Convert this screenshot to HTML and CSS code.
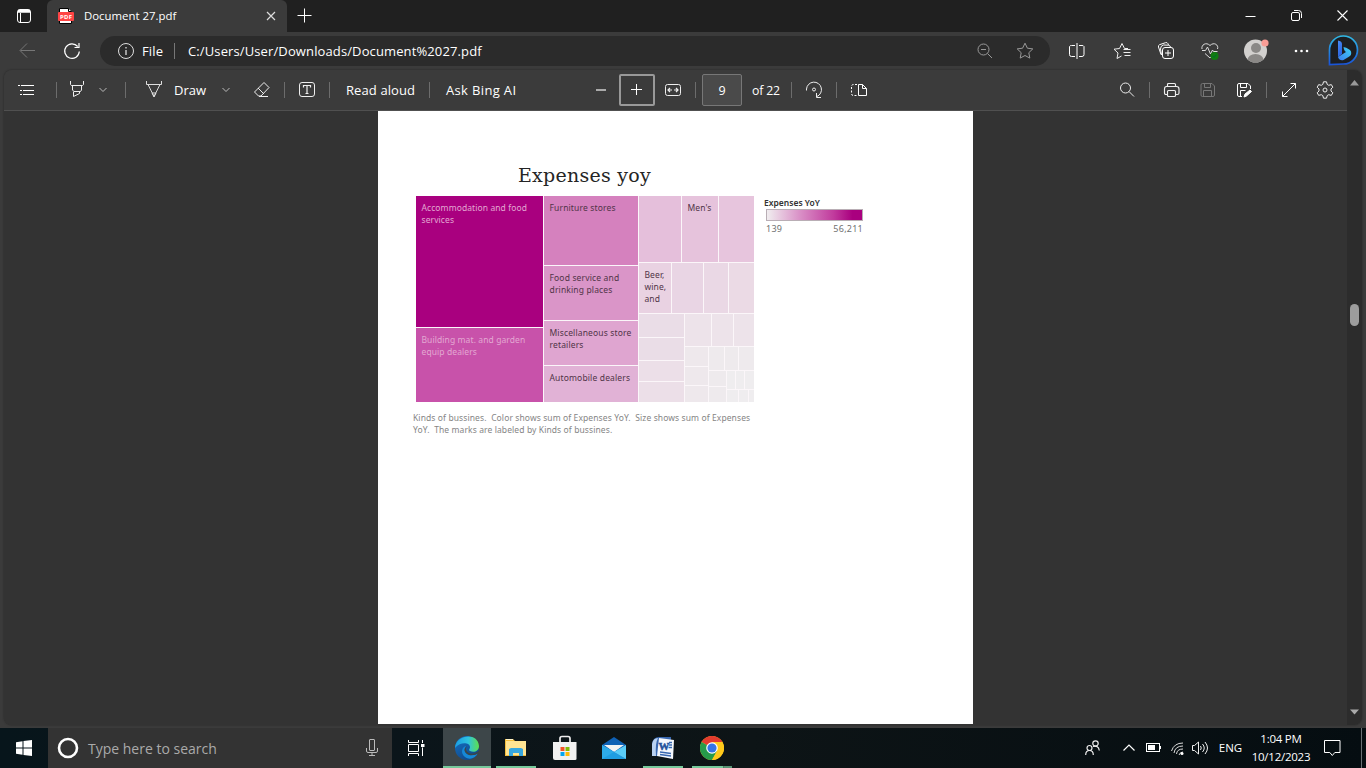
FILE: index.html
```html
<!DOCTYPE html>
<html lang="en">
<head>
<meta charset="utf-8">
<title>Document 27.pdf</title>
<link rel="stylesheet" href="styles.css">
</head>
<body>
<div class="screen">
  <header class="titlebar">
    <div class="tab-actions"><svg width="16" height="16" viewBox="0 0 16 16" fill="none" stroke="#fff"><rect x="1.5" y="1.5" width="13" height="13" rx="2.5"/><path d="M2 2.5h12M2 4h12" stroke-width="1.6"/><path d="M4.5 5v9"/></svg></div>
    <div class="tab">
      <svg class="pdf-icon" width="16" height="16" viewBox="0 0 16 16"><path d="M1.5.5h9l3 3v12h-12z" fill="#fff" stroke="#000"/><path d="M10.500.5v3h3" fill="#fff" stroke="#000"/><rect y="4" width="16" height="9" rx="1" fill="#f44"/><text x="8" y="11" class="pdf-label" textLength="12">PDF</text></svg>
      <span class="tab-title">Document 27.pdf</span>
      <svg class="tab-close" width="10" height="10" viewBox="0 0 10 10" stroke="#ddd" stroke-width="1.2"><path d="M1 1l8 8M9 1L1 9"/></svg>
    </div>
    <svg class="new-tab" width="15" height="16" viewBox="0 0 15 16" stroke="#fff"><path d="M7.500.5v14M.5 7.500h14"/></svg>
    <div class="window-buttons">
      <span><svg width="12" height="12" stroke="#fff"><path d="M.5 6.500h10"/></svg></span>
      <span><svg width="12" height="12" fill="none" stroke="#fff"><rect x=".5" y="2.500" width="8" height="8" rx="1.500"/><path d="M3 .5h4.500a3 3 0 0 1 3 3V8"/></svg></span>
      <span><svg width="12" height="12" stroke="#fff" stroke-width="1.100"><path d="M.5.5l10 10M10.500.5l-10 10"/></svg></span>
    </div>
  </header>

  <nav class="navbar">
    <span class="cell"><svg width="18" height="16" fill="none" stroke="#777"><path d="M16 7.500H1.500M8 .5l-7 7 7 7"/></svg></span>
    <span class="cell"><svg width="18" height="18" fill="none" stroke="#fff" stroke-width="1.200"><path d="M16.300 9.500a7.300 7.300 0 1 1-1.600-5M16 1v4.500h-4.500"/></svg></span>
    <div class="address">
      <svg width="18" height="18" fill="none" stroke="#ddd"><circle cx="9" cy="9" r="7.500"/><path d="M9 8v5M9 5v1.500" stroke-width="1.300"/></svg>
      <span class="scheme">File</span><i class="divider"></i>
      <span class="url">C:/Users/User/Downloads/Document%2027.pdf</span>
      <svg class="zoom-out" width="16" height="16" fill="none" stroke="#999"><circle cx="6.500" cy="6.500" r="5.500"/><path d="M10.500 10.500l4.500 4.500M4 6.500h5"/></svg>
      <svg width="18" height="18" viewBox="0 0 18 18" fill="none" stroke="#999"><path d="M9 1.200l2.400 5 5.400.700-4 3.800 1 5.400L9 13.500l-4.800 2.600 1-5.400-4-3.800 5.400-.7z"/></svg>
    </div>
    <span class="cell"><svg width="16" height="16" fill="none" stroke="#fff"><path d="M6 2.500H2.500a2 2 0 0 0-2 1v8a2 2 0 0 0 2 2H6M10 2.500h3a2 2 0 0 1 2 1v8a2 2 0 0 1-2 2h-3M8 0v16"/></svg></span>
    <span class="cell"><svg width="18" height="18" fill="none" stroke="#eee"><path d="M15 6.500h-3.500L9 1.500 6.500 6.500l-5.500.7L5 11l-1 5.500L8.500 14M10.500 7.500h7M10.500 10.500h7M11.500 13.500h6"/></svg></span>
    <span class="cell"><svg width="18" height="18" fill="none" stroke="#fff"><rect x="5.500" y="5.500" width="11" height="11" rx="2.500"/><path d="M11 8v6M8 11h6M4 12.500L1.500 5a2 2 0 0 1 1-2.300l6-2a2 2 0 0 1 2.500 1l.5 1.500M4.500 13L3.500 7a4 4 0 0 1 3-4l5 .2a2.500 2.500 0 0 1 2 1.800"/></svg></span>
    <span class="cell"><svg width="18" height="18" fill="none" stroke="#ddd"><path d="M1 7c-1-4 4-7.500 8-3.500 4-4 9-.5 7.500 3.500M4 11.500L9 16l1-1M1 8.500h3.500L6.500 5l3 7 2-4 1 1.500h4"/><circle cx="13.500" cy="14" r="4" fill="#107c10" stroke="none"/><path d="M11.500 14l1.500 1.500 2.500-3" stroke="#063"/></svg></span>
    <span class="cell"><svg class="avatar" width="26" height="26" viewBox="0 0 26 26"><defs><clipPath id="face"><circle cx="12.500" cy="14" r="11.500"/></clipPath></defs><circle cx="12.500" cy="14" r="11.500" fill="#d2d0ce"/><circle cx="13" cy="11" r="5" fill="#8a8886"/><ellipse cx="12.500" cy="23" rx="8" ry="6" fill="#8a8886" clip-path="url(#face)"/><circle cx="22" cy="6" r="3.600" fill="#f99d96"/></svg></span>
    <span class="cell"><svg width="16" height="4" fill="#fff"><circle cx="2" cy="2" r="1.300"/><circle cx="7.500" cy="2" r="1.300"/><circle cx="13" cy="2" r="1.300"/></svg></span>
    <span class="cell"><svg width="32" height="32" viewBox="0 0 32 32"><defs><linearGradient id="ring" x2="0" y2="1"><stop stop-color="#30b9e5"/><stop offset="1" stop-color="#1954d8"/></linearGradient><linearGradient id="bing" x2=".4" y2="1"><stop stop-color="#4a8cf5"/><stop offset="1" stop-color="#2a62e0"/></linearGradient><linearGradient id="lobe" x1="1" x2="0" y2="1"><stop stop-color="#3ed3f3"/><stop offset="1" stop-color="#3b7df0"/></linearGradient></defs><path d="M1.500 29.500V15.500A14 14 0 1 1 15.500 29z" fill="#1c1e22" stroke="url(#ring)" stroke-width="1.700"/><path d="M10 5.500q3.500.5 4 3V19l-4 3z" fill="url(#bing)"/><path d="M15.500 12q6 1.500 7.500 4.500 1 4-2.500 5.500l-5 3q-4 1-5.500-3l8-5q-2-1-2.500-5z" fill="url(#lobe)"/></svg></span>
  </nav>

  <main class="viewer">
    <div class="viewer-main">
      <div class="toolbar">
        <span class="tool contents"><svg width="18" height="12" stroke="#fff"><path d="M4 1.500h13M6 6.500h11M6 10.500h11M1 1.500h2M3 6.500h2M3 10.500h2"/></svg></span>
        <i class="sep wide"></i>
        <span class="tool slim"><svg width="16" height="18" fill="none" stroke="#eee"><path d="M1.500 0v3.500a2 2 0 0 0 1 1h11a2 2 0 0 0 1-1V0M3.500 5v4l1.500 1.500h6.500L12.500 9V5M4.500 10.500v5l6-3v-2"/></svg></span>
        <span class="tool drop"><svg width="8" height="6" fill="none" stroke="#bbb"><path d="M.5 1L4 4.500 7.500 1"/></svg></span>
        <i class="sep wide"></i>
        <span class="tool draw-icon"><svg width="16" height="18" fill="none" stroke="#ddd"><path d="M.5 0v3.500H15.500V0M2 3.500l6 12 6-12M6 12l2 4 2-4z"/></svg></span>
        <span class="draw">Draw</span>
        <span class="tool"><svg width="8" height="6" fill="none" stroke="#bbb"><path d="M.5 1L4 4.500 7.500 1"/></svg></span>
        <span class="tool"><svg width="16" height="18" viewBox="0 0 16 18" fill="none" stroke="#eee"><path d="M10 1.500l5 5-8 8.500H4.500L.5 11zM4 7l6 6M5 15.500h9"/></svg></span>
        <i class="sep"></i>
        <span class="tool"><svg width="16" height="16" fill="none" stroke="#eee"><rect x=".5" y=".5" width="15" height="14" rx="2.500"/><path d="M4.500 5.500v-2h7v2M8 3.500v8M6.500 11.500h3" stroke-width="1.200"/></svg></span>
        <i class="sep"></i>
        <span class="label read">Read aloud</span>
        <i class="sep"></i>
        <span class="label ask">Ask Bing AI</span>
        <span class="tool"><svg width="12" height="4" stroke="#aaa" stroke-width="2"><path d="M1 2h10"/></svg></span>
        <span class="tool focused"><svg width="12" height="12" stroke="#fff"><path d="M5.500 0v11M0 5.500h11"/></svg></span>
        <span class="tool"><svg width="16" height="14" fill="none" stroke="#eee"><rect x=".5" y="1.500" width="15" height="11" rx="2"/><path d="M3 7h4M5 5L3 7l2 2M13 7H9M11 5l2 2-2 2" stroke-width="1.200"/></svg></span>
        <i class="sep"></i>
        <span class="page-number">9</span>
        <span class="page-total">of 22</span>
        <i class="sep"></i>
        <span class="tool"><svg width="18" height="18" fill="none" stroke="#eee"><path d="M1.500 9.500V8a7.500 7.500 0 1 1 10.500 7.500M11.500 12v4.500H16"/><circle cx="9" cy="8.500" r="1.500"/></svg></span>
        <i class="sep"></i>
        <span class="tool"><svg width="18" height="14" fill="none" stroke="#fff"><path d="M7 1.500H3a2 2 0 0 0-1.500 2v7a2 2 0 0 0 1.500 2h4" stroke-dasharray="2 1.500"/><path d="M8.500 1.500H12.500l4 4v7h-8zM12.500 1.500v4h4"/></svg></span>
        <span class="spacer"></span>
        <span class="tool"><svg width="16" height="16" fill="none" stroke="#eee"><circle cx="6.500" cy="6" r="5"/><path d="M10 9.500l5 5"/></svg></span>
        <i class="sep"></i>
        <span class="tool"><svg width="18" height="16" fill="none" stroke="#eee" stroke-width="1.150"><path d="M4.500 4.500V2.500q0-1 1-1h6q1 0 1 1v2M4.500 12.500H3q-1.500 0-1.500-1.500V7q0-2.500 2-2.500h10q2.500 0 2.500 2.500v4q0 1.500-1.500 1.500h-2"/><rect x="4.500" y="8.500" width="8" height="6" rx="1"/></svg></span>
        <span class="tool"><svg width="16" height="16" fill="none" stroke="#777"><path d="M2.500 1.500h9.500l2.500 2.500v9q0 1.500-1.500 1.500H2.500Q1 14.500 1 13V3q0-1.500 1.500-1.500zM4.500 1.500v4h6v-4M3.500 14.500V8.500h8v6"/></svg></span>
        <span class="tool"><svg width="16" height="16" fill="none" stroke="#fff"><path d="M6 14.500H3Q1.500 14.500 1.500 13V3q0-1.500 1.500-1.500h9l2.500 2.500v3M4.500 1.500v4h6v-4M4.500 14V8.500h5"/><path d="M8 15l1-3 5-4 1.500 1.500-5 4.500z" fill="#fff"/></svg></span>
        <i class="sep"></i>
        <span class="tool"><svg width="16" height="16" fill="none" stroke="#fff"><path d="M1.500 14.500l13-13M9.500 1.500h5v5M1.500 9.500v5h5"/></svg></span>
        <span class="tool"><svg width="18" height="18" viewBox="0 0 18 18" fill="none" stroke="#eee"><path d="M7.500.8h3l.7 2.600 1.500.9 2.600-.7 1.500 2.600L15 8v2l1.800 1.800-1.500 2.600-2.600-.7-1.500.9-.7 2.600h-3l-.7-2.600-1.500-.9-2.600.7-1.500-2.600L3 10V8L1.200 6.200l1.500-2.600 2.600.7 1.500-.9z" stroke-linejoin="round"/><circle cx="9" cy="9" r="2"/></svg></span>
      </div>

      <div class="canvas">
        <article class="page">
          <h1>Expenses yoy</h1>
          <div class="chart-row">
            <div class="treemap">
              <div class="col c1">
                <div class="box accommodation">Accommodation and food<br>services</div>
                <div class="box building">Building mat. and garden<br>equip dealers</div>
              </div>
              <div class="col c2">
                <div class="box furniture">Furniture stores</div>
                <div class="box food">Food service and<br>drinking places</div>
                <div class="box misc">Miscellaneous store<br>retailers</div>
                <div class="box auto">Automobile dealers</div>
              </div>
              <div class="col c3">
                <div class="row r1"><div class="s1 w42"></div><div class="box s1b w36">Men's</div><div class="s1c grow"></div></div>
                <div class="row r2"><div class="box s2 w32">Beer,<br>wine,<br>and</div><div class="s2b w30"></div><div class="s2c w24"></div><div class="s2d grow"></div></div>
                <div class="row grow">
                  <div class="col w45"><div class="s3 h23"></div><div class="s3 h22"></div><div class="s3b h20"></div><div class="s3b grow"></div></div>
                  <div class="col grow">
                    <div class="row h32"><div class="s4 w26"></div><div class="s4 w21"></div><div class="s4 grow"></div></div>
                    <div class="row grow">
                      <div class="col w23"><div class="s5 h19"></div><div class="s5 h18"></div><div class="s5 grow"></div></div>
                      <div class="col grow">
                        <div class="row h23"><div class="s6 w15"></div><div class="s6 w13"></div><div class="s6 grow"></div></div>
                        <div class="row grow">
                          <div class="col w17"><div class="s6 h15"></div><div class="s6 grow"></div></div>
                          <div class="col grow">
                            <div class="row h18"><div class="s7 w8"></div><div class="s7 w8"></div><div class="s7 grow"></div></div>
                            <div class="row grow"><div class="s7 w11"></div><div class="s7 w9"></div><div class="s7 grow"></div></div>
                          </div>
                        </div>
                      </div>
                    </div>
                  </div>
                </div>
              </div>
            </div>
            <aside class="legend">
              <b>Expenses YoY</b>
              <div class="scale"></div>
              <div class="range"><span>139</span><span>56,211</span></div>
            </aside>
          </div>
          <p class="caption">Kinds of bussines.&nbsp; Color shows sum of Expenses YoY.&nbsp; Size shows sum of Expenses<br>YoY.&nbsp; The marks are labeled by Kinds of bussines.</p>
        </article>
      </div>
    </div>
    <div class="scrollbar">
      <svg width="9" height="6" fill="#999"><path d="M4.500 0L9 5.500H0z"/></svg>
      <i class="thumb"></i>
      <svg width="9" height="6" fill="#aaa"><path d="M4.500 5.500L9 .5H0z"/></svg>
    </div>
  </main>

  <footer class="taskbar">
    <span class="start"><svg width="16" height="16" fill="#fff"><path d="M0 2.200L6.500 1.300v6.200H0zM7.500 1.100L16 0v7.500H7.500zM0 8.500h6.500v6.200L0 13.800zM7.500 8.500H16V16l-8.500-1.100z"/></svg></span>
    <div class="search">
      <svg width="22" height="22" fill="none" stroke="#fff" stroke-width="2.600"><circle cx="11" cy="11" r="9"/></svg>
      <span>Type here to search</span>
      <svg width="12" height="18" fill="none" stroke="#bbb"><rect x="3.500" y=".5" width="5" height="11" rx=".5"/><path d="M.5 9v3q0 1.500 1.500 1.500h8q1.500 0 1.500-1.500V9M6 14v2M3 16.500h6"/></svg>
    </div>
    <span class="task-view"><svg width="17" height="16" fill="none" stroke="#fff"><path d="M.5 0v2.500h10V0M.5 16v-2.500h10V16M.5 4.500h10v7H.5zM14.500 0v3M14.500 7.500V16"/><path d="M13 4h3.500v3H13z" fill="#fff" stroke="none"/></svg></span>
    <span class="app active"><svg width="24" height="24" viewBox="0 0 24 24"><defs><linearGradient id="e1"><stop stop-color="#1b9de2"/><stop offset=".55" stop-color="#2fc3df"/><stop offset="1" stop-color="#5ee04b"/></linearGradient><linearGradient id="e2" x2=".5" y2="1"><stop stop-color="#1473c8"/><stop offset="1" stop-color="#114a8b"/></linearGradient></defs><circle cx="12" cy="12" r="12" fill="url(#e2)"/><path d="M0 12C0-1 23-5 24 10c0 5-5 7-9 5-2-1 0-2 0-4 0-4-9-6-15 1z" fill="url(#e1)"/><path d="M11 10c-4 5 1 10 6 9 3 0 5-1 6-2-3 6-9 7-13 4-5-4-3-10 1-11z" fill="#1688d7"/><path d="M12 10q-3 4 2 7 4 2 10-2v2q-7 4-12 1-5-4 0-8z" fill="#3b4649"/></svg></span>
    <span class="app open"><svg width="22" height="20" viewBox="0 0 22 20"><path d="M0 1h8l2 2h11v15H0z" fill="#f4bd3b"/><path d="M1 3h20v14H1z" fill="#ffe493"/><path d="M1 1.500h7" stroke="#fff4ca"/><path d="M4 18v-7l2-1h10l2 1v7h-4v-3H8v3z" fill="#37a7df"/></svg></span>
    <span class="app"><svg width="24" height="26" viewBox="0 0 24 26"><path d="M7 10V3.500q0-2 2-2h6q2 0 2 2V10" fill="none" stroke="#eee" stroke-width="1.700"/><path d="M0 7h23.500v17q0 1-1.500 1H2q-2 0-2-2z" fill="#f1f1f1"/><path d="M7.500 12h4v4h-4z" fill="#f35325"/><path d="M12.500 12h4v4h-4z" fill="#81bc06"/><path d="M7.500 17h4v4h-4z" fill="#05a6f0"/><path d="M12.500 17h4v4h-4z" fill="#ffba08"/></svg></span>
    <span class="app"><svg width="24" height="24" viewBox="0 0 24 24"><path d="M0 9l12-8 12 8v14H0z" fill="#0f61b5"/><path d="M2 9h20l-10 7z" fill="#f3f3f3"/><path d="M0 9l24 14H0z" fill="#1f9de2"/><path d="M24 9v14L12 16z" fill="#5acdf8"/><path d="M0 9l12 7-12 7z" fill="#2daae8"/></svg></span>
    <span class="app open"><svg width="24" height="24" viewBox="0 0 24 24"><path d="M1 8Q2 1 8 1h12v19H1z" fill="#3867af"/><path d="M1 8Q2 2 7 2q-3 5-2 18H1z" fill="#b9d1f0"/><path d="M8 2l15 2-1 19-16-3z" fill="#f5f8fd"/><text x="7.500" y="14" class="word-mark" textLength="10">W</text><path d="M18 6.500h3M18 9h3M17.500 11.500h3.500M9 16l11 1.500M9 18.500l11 1.500" stroke="#3867af" stroke-width="1.300"/></svg></span>
    <span class="app open chrome"><svg width="24" height="24" viewBox="0 0 24 24"><circle cx="12" cy="12" r="12" fill="#ffc91b"/><path d="M12 12L1.600 6A12 12 0 0 1 22.400 6z" fill="#e33b2e"/><path d="M12 12L1.600 6A12 12 0 0 0 12 24l5-9z" fill="#269b4a"/><path d="M12 6h10.400A12 12 0 0 1 12 24l5-9z" fill="#ffc91b"/><circle cx="12" cy="12" r="5.800" fill="#fff"/><circle cx="12" cy="12" r="4.600" fill="#3474e6"/></svg></span>
    <span class="spacer"></span>
    <span class="tray people"><svg width="16" height="16" fill="none" stroke="#eee" stroke-width="1.200"><circle cx="10.500" cy="3.500" r="2.700"/><circle cx="4.500" cy="8" r="2.500"/><path d="M.7 15q0-4.500 3.800-4.500T8.300 15M8 6.500q5.500-1.500 6.300 4"/></svg></span>
    <span class="tray up"><svg width="12" height="8" fill="none" stroke="#fff" stroke-width="1.200"><path d="M.5 6.500l5.500-5.500 5.500 5.500"/></svg></span>
    <span class="tray battery"><svg width="16" height="10" fill="none" stroke="#fff"><rect x=".5" y=".5" width="13" height="8"/><path d="M2 2h7v5H2z" fill="#fff" stroke="none"/><path d="M14.500 3v3"/></svg></span>
    <span class="tray wifi"><svg width="14" height="13" fill="none" stroke="#ddd"><path d="M.5 9Q3 1 12 1M3 11Q4 4 12 4M5.500 12Q6 7 12 7M8 13q1-3 4-3"/><circle cx="11" cy="11.500" r="1.500" fill="#fff" stroke="none"/></svg></span>
    <span class="tray sound"><svg width="18" height="14" fill="none" stroke="#eee"><path d="M.5 4.500h2l4-3.500v12l-4-3.500h-2zM8.500 5q1.500 2 0 4M10.500 3q3.500 4 0 8M13 1q5 6 0 12"/></svg></span>
    <span class="tray lang">ENG</span>
    <span class="tray clock">1:04 PM<br>10/12/2023</span>
    <span class="tray notice"><svg width="18" height="16" fill="none" stroke="#fff"><path d="M.5.500h15.500v12h-5.200l-2.500 3-2.500-3H.5z"/></svg></span>
    <i class="desktop-edge"></i>
  </footer>
</div>
</body>
</html>
```
FILE: styles.css
```css
* { box-sizing: border-box; }
body { margin: 0; font-family: "Open Sans", "Noto Sans", sans-serif; color: #fff; }
svg { display: block; flex: none; }
.screen { width: 1366px; height: 768px; overflow: hidden; display: flex; flex-direction: column; background: #3b3b3b; }

.titlebar { height: 32px; flex: none; display: flex; align-items: center; background: #202020; }
.tab-actions { width: 47px; display: flex; justify-content: center; }
.tab { width: 240px; height: 32px; display: flex; align-items: center; padding: 0 11px; background: #3b3b3b; border-radius: 6px 6px 0 0; font-size: 11.400px; }
.tab-title { margin-left: 10px; flex: 1; white-space: nowrap; padding-bottom: 1px; }
.pdf-label { font: bold 6px "Open Sans", sans-serif; fill: #fff; text-anchor: middle; }
.new-tab { margin-left: 10px; }
.window-buttons { margin-left: auto; display: flex; }
.window-buttons span { width: 46px; display: flex; justify-content: center; }

.navbar { height: 38px; flex: none; display: grid; grid-template-columns: 56px 32px 967px 44px 46px 42px 46px 46px 46px 38px; align-items: center; }
.cell { display: flex; justify-content: center; align-items: center; }
.avatar { margin-top: -3px; }
.address { height: 30px; margin: 0 5px 0 12px; padding: 0 16px 0 17px; border-radius: 15px; background: #2b2b2b; display: flex; align-items: center; font-size: 13px; white-space: nowrap; }
.scheme { margin-left: 7px; width: 32px; letter-spacing: .15px; }
.divider { width: 1px; height: 16px; background: #777; }
.url { margin-left: 13px; flex: 1; letter-spacing: .12px; }
.zoom-out { margin-right: 23px; }

.viewer { height: 655px; flex: none; margin: 0 4px; display: flex; border-radius: 8px; overflow: hidden; box-shadow: 0 0 2px #222; }
.viewer-main { width: 1343px; display: flex; flex-direction: column; }
.toolbar { height: 41px; flex: none; display: flex; align-items: center; background: #3b3b3b; border-bottom: 1px solid #505050; font-size: 13px; white-space: nowrap; }
.tool { width: 36px; height: 32px; display: flex; align-items: center; justify-content: center; }
.contents { width: 44px; }
.slim { width: 24px; }
.drop { width: 28px; }
.draw-icon { width: 40px; }
.draw { width: 34px; }
.sep { width: 1px; height: 16px; margin: 0 4px; background: #6c6c6c; }
.sep.wide { margin: 0 8px; }
.label { padding-left: 12px; }
.read { width: 91px; letter-spacing: .1px; }
.ask { width: 149px; letter-spacing: .35px; }
.focused { border: 2px solid #999; border-radius: 2px; }
.page-number { width: 40px; height: 32px; margin: 0 2px; border: 1px solid #777; border-radius: 2px; background: #4a4a4a; display: flex; align-items: center; justify-content: center; font-size: 12.500px; }
.page-total { width: 43px; padding-left: 8px; font-size: 12.300px; letter-spacing: -.2px; }
.spacer { flex: 1; }
.toolbar .tool:last-child { margin-right: 4px; }

.canvas { flex: 1; background: #333; display: flex; padding-left: 374px; }
.page { width: 595px; height: 613px; background: #fff; color: #333; padding: 50px 0 0 38px; font-family: "Noto Sans", "Open Sans", sans-serif; }
h1 { margin: 0 0 7px 102px; font: 19px/28px "DejaVu Serif", serif; letter-spacing: .25px; color: #252525; white-space: nowrap; }
.chart-row { display: flex; }
.treemap { width: 337.500px; height: 206px; display: flex; gap: 1px; background: #fbf6f9; font-size: 8.500px; line-height: 12px; white-space: nowrap; color: #503447; letter-spacing: .09px; }
.col { display: flex; flex-direction: column; gap: 1px; }
.row { display: flex; gap: 1px; }
.col > div, .row > div { min-width: 0; min-height: 0; }
.grow { flex: 1; }
.box { padding: 6px 0 0 5.500px; }
.c1 { width: 127px; color: #e3a8d2; }
.c2 { width: 94px; letter-spacing: .15px; }
.c3 { flex: 1; }
.accommodation { height: 131px; background: #a9007f; }
.building { flex: 1; background: #c852aa; }
.furniture { height: 69px; background: #d581be; }
.food { height: 54px; background: #da95c8; }
.misc { height: 44px; background: #dfa5d0; }
.auto { flex: 1; background: #e1b2d6; }
.r1 { height: 65.500px; }
.r2 { height: 50.500px; }
.s1 { background: #e5bfdb; }
.s1b { background: #e6c3dc; }
.s1c { background: #e7c5dd; }
.s2 { background: #e9d2e2; }
.s2b { background: #e9d5e4; }
.s2c { background: #ead8e5; }
.s2d { background: #ebdae5; }
.s3 { background: #eadde7; }
.s3b { background: #ecdfe8; }
.s4 { background: #ede3ea; }
.s5 { background: #eee8ec; }
.s6 { background: #eeeaed; }
.s7 { background: #efedef; }
.w8 { width: 8px; }
.w9 { width: 9px; }
.w11 { width: 11px; }
.w13 { width: 13px; }
.w15 { width: 15px; }
.w17 { width: 17px; }
.w21 { width: 21px; }
.w23 { width: 23px; }
.w24 { width: 24px; }
.w26 { width: 26px; }
.w30 { width: 30.500px; }
.w32 { width: 32px; }
.w36 { width: 36px; }
.w42 { width: 42px; }
.w45 { width: 45px; }
.h15 { height: 15px; }
.h18 { height: 18px; }
.h19 { height: 19px; }
.h20 { height: 20px; }
.h22 { height: 22px; }
.h23 { height: 23px; }
.h32 { height: 32px; }
.legend { width: 99px; margin-left: 10.500px; font-size: 8.500px; line-height: 12px; white-space: nowrap; }
.legend b { display: block; font-weight: 600; line-height: 13px; }
.scale { width: 97px; height: 12px; margin: 0 0 2px 2px; border: 1px solid #b9aeb5; background: linear-gradient(90deg, #f0edef, #d98fc6 35%, #c13b9d 70%, #a9007f 90%); }
.range { display: flex; justify-content: space-between; padding-left: 2px; color: #707070; font-size: 9px; letter-spacing: .25px; }
.caption { margin: 10px 0 0 -3px; font-size: 8.500px; line-height: 12px; letter-spacing: .1px; color: #858585; white-space: nowrap; }

.scrollbar { width: 15px; background: #2c2c2c; display: flex; flex-direction: column; align-items: center; padding: 10px 0 10px; justify-content: space-between; }
.thumb { width: 9px; height: 22px; border-radius: 5px; background: #9d9d9d; margin-bottom: 172px; margin-top: 6px; }

.taskbar { height: 40px; margin-top: 3px; flex: none; display: flex; background: linear-gradient(90deg, #07151b, #0b151a 30%, #0d1416 55%, #050d11); }
.start { width: 48px; display: flex; align-items: center; justify-content: center; }
.search { width: 344px; display: flex; align-items: center; padding: 0 14px 0 9px; background: #333; color: #aaa; font-size: 14px; }
.search span { margin-left: 9px; flex: 1; }
.task-view { width: 51px; display: flex; align-items: center; padding-left: 16px; }
.app { width: 48px; margin-right: 1px; display: grid; place-items: center; }
.active { background: #3d4649; box-shadow: inset 0 -2px #76c99b; }
.open { background: linear-gradient(#76c99b, #76c99b) 4px 38px / 40px 2px no-repeat; }
.chrome { background: linear-gradient(90deg, #76c99b 31px, #416b56 31px, #589374 32px) 4px 38px / 40px 2px no-repeat; }
.word-mark { font: bold 11px "Liberation Serif", serif; fill: #24539c; stroke: #24539c; stroke-width: .5px; }
.tray { display: flex; align-items: center; justify-content: center; font-size: 11.500px; white-space: nowrap; }
.people { width: 48px; }
.up { width: 24px; }
.battery { width: 26px; }
.wifi { width: 22px; }
.sound { width: 24px; }
.lang { width: 35px; padding-bottom: 1px; }
.clock { width: 66px; text-align: center; font-size: 11.500px; letter-spacing: -.25px; line-height: 18px; padding-bottom: 1px; }
.notice { width: 38px; }
.desktop-edge { width: 1px; margin: 0 4px 0 9px; background: #687074; }
```
